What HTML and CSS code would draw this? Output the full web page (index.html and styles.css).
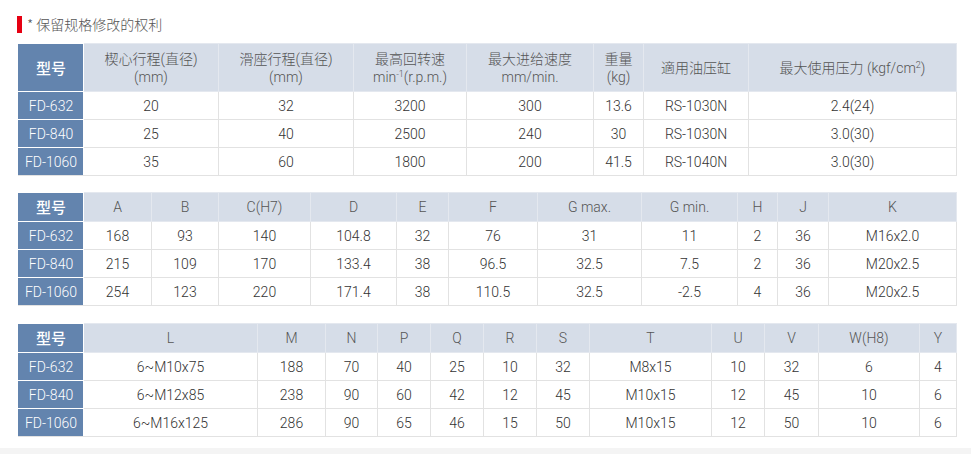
FILE: index.html
```html
<!DOCTYPE html>
<html lang="zh">
<head>
<meta charset="utf-8">
<title>规格</title>
<link rel="stylesheet" href="styles.css">
</head>
<body>
<div class="page">
  <div class="note"><span class="mark"></span><span class="note-text">* 保留规格修改的权利</span></div>

  <table class="spec spec-1">
    <colgroup>
      <col style="width:65px"><col style="width:135px"><col style="width:135px"><col style="width:113px"><col style="width:127px"><col style="width:50px"><col style="width:105px"><col style="width:208px">
    </colgroup>
    <thead>
      <tr>
        <th class="model">型号</th>
        <th>楔心行程(直径)<br>(mm)</th>
        <th>滑座行程(直径)<br>(mm)</th>
        <th>最高回转速<br>min<sup>-1</sup>(r.p.m.)</th>
        <th>最大进给速度<br>mm/min.</th>
        <th>重量<br>(kg)</th>
        <th>適用油压缸</th>
        <th>最大使用压力 (kgf/cm<sup>2</sup>)</th>
      </tr>
    </thead>
    <tbody>
      <tr><td class="model">FD-632</td><td>20</td><td>32</td><td>3200</td><td>300</td><td>13.6</td><td>RS-1030N</td><td>2.4(24)</td></tr>
      <tr><td class="model">FD-840</td><td>25</td><td>40</td><td>2500</td><td>240</td><td>30</td><td>RS-1030N</td><td>3.0(30)</td></tr>
      <tr><td class="model">FD-1060</td><td>35</td><td>60</td><td>1800</td><td>200</td><td>41.5</td><td>RS-1040N</td><td>3.0(30)</td></tr>
    </tbody>
  </table>

  <table class="spec spec-2">
    <colgroup>
      <col style="width:65px"><col style="width:68px"><col style="width:67px"><col style="width:92px"><col style="width:86px"><col style="width:52px"><col style="width:89px"><col style="width:104px"><col style="width:96px"><col style="width:40px"><col style="width:51px"><col style="width:128px">
    </colgroup>
    <thead>
      <tr>
        <th class="model">型号</th><th>A</th><th>B</th><th>C(H7)</th><th>D</th><th>E</th><th>F</th><th>G max.</th><th>G min.</th><th>H</th><th>J</th><th>K</th>
      </tr>
    </thead>
    <tbody>
      <tr><td class="model">FD-632</td><td>168</td><td>93</td><td>140</td><td>104.8</td><td>32</td><td>76</td><td>31</td><td>11</td><td>2</td><td>36</td><td>M16x2.0</td></tr>
      <tr><td class="model">FD-840</td><td>215</td><td>109</td><td>170</td><td>133.4</td><td>38</td><td>96.5</td><td>32.5</td><td>7.5</td><td>2</td><td>36</td><td>M20x2.5</td></tr>
      <tr><td class="model">FD-1060</td><td>254</td><td>123</td><td>220</td><td>171.4</td><td>38</td><td>110.5</td><td>32.5</td><td>-2.5</td><td>4</td><td>36</td><td>M20x2.5</td></tr>
    </tbody>
  </table>

  <table class="spec spec-3">
    <colgroup>
      <col style="width:65px"><col style="width:174px"><col style="width:68px"><col style="width:52px"><col style="width:53px"><col style="width:53px"><col style="width:53px"><col style="width:53px"><col style="width:122px"><col style="width:53px"><col style="width:54px"><col style="width:101px"><col style="width:37px">
    </colgroup>
    <thead>
      <tr>
        <th class="model">型号</th><th>L</th><th>M</th><th>N</th><th>P</th><th>Q</th><th>R</th><th>S</th><th>T</th><th>U</th><th>V</th><th>W(H8)</th><th>Y</th>
      </tr>
    </thead>
    <tbody>
      <tr><td class="model">FD-632</td><td>6~M10x75</td><td>188</td><td>70</td><td>40</td><td>25</td><td>10</td><td>32</td><td>M8x15</td><td>10</td><td>32</td><td>6</td><td>4</td></tr>
      <tr><td class="model">FD-840</td><td>6~M12x85</td><td>238</td><td>90</td><td>60</td><td>42</td><td>12</td><td>45</td><td>M10x15</td><td>12</td><td>45</td><td>10</td><td>6</td></tr>
      <tr><td class="model">FD-1060</td><td>6~M16x125</td><td>286</td><td>90</td><td>65</td><td>46</td><td>15</td><td>50</td><td>M10x15</td><td>12</td><td>50</td><td>10</td><td>6</td></tr>
    </tbody>
  </table>
</div>
<div class="footer-band"></div>
</body>
</html>
```

FILE: styles.css
```css
html, body {
  margin: 0;
  padding: 0;
  background: #fff;
}

body {
  font-family: Roboto, "Noto Sans CJK SC", sans-serif;
  color: #444;
  overflow: hidden;
}

.page {
  padding: 16px 15px 0 18px;
}

.note {
  display: flex;
  align-items: center;
  height: 17px;
  margin-left: -1px;
}

.mark {
  width: 5px;
  height: 17px;
  background: #e60012;
  margin-right: 5px;
}

.note-text {
  font-family: "Noto Sans CJK SC", sans-serif;
  font-size: 14px;
  font-weight: 300;
  color: #555;
  line-height: 17px;
}

.spec {
  width: 938px;
  table-layout: fixed;
  border-collapse: collapse;
  text-align: center;
}

.spec-1 {
  margin-top: 10px;
}

.spec-2 {
  margin-top: 16px;
}

.spec-3 {
  margin-top: 17px;
}

.spec th,
.spec td {
  padding: 0;
  border: 1px solid #e2e2e2;
  white-space: nowrap;
  overflow: hidden;
}

.spec th {
  background: #d6dde8;
  border-color: #e4e8ef;
  font-family: Roboto, "Noto Sans CJK SC", sans-serif;
  font-weight: 300;
  font-size: 14px;
  color: #555;
  height: 28px;
  line-height: 18px;
}

.spec-1 th {
  height: 47px;
}

.spec th sup {
  font-size: 9px;
  line-height: 0;
  vertical-align: 5px;
}

.spec td {
  font-family: Roboto, sans-serif;
  font-weight: 300;
  font-size: 14px;
  color: #333;
  height: 27px;
}

.spec .model {
  background: #6384ae;
  color: #fff;
  border-color: #fff;
  border-left-color: #6384ae;
}

.spec th.model {
  font-family: "Noto Sans CJK SC", sans-serif;
  font-weight: 500;
  font-size: 15px;
  color: #fff;
}

.spec td.model {
  font-weight: 300;
  font-size: 14px;
}

.spec tbody tr:last-child td.model {
  border-bottom-color: #e2e2e2;
}

.footer-band {
  height: 6px;
  margin-top: 11px;
  background: #f4f4f4;
}
```
